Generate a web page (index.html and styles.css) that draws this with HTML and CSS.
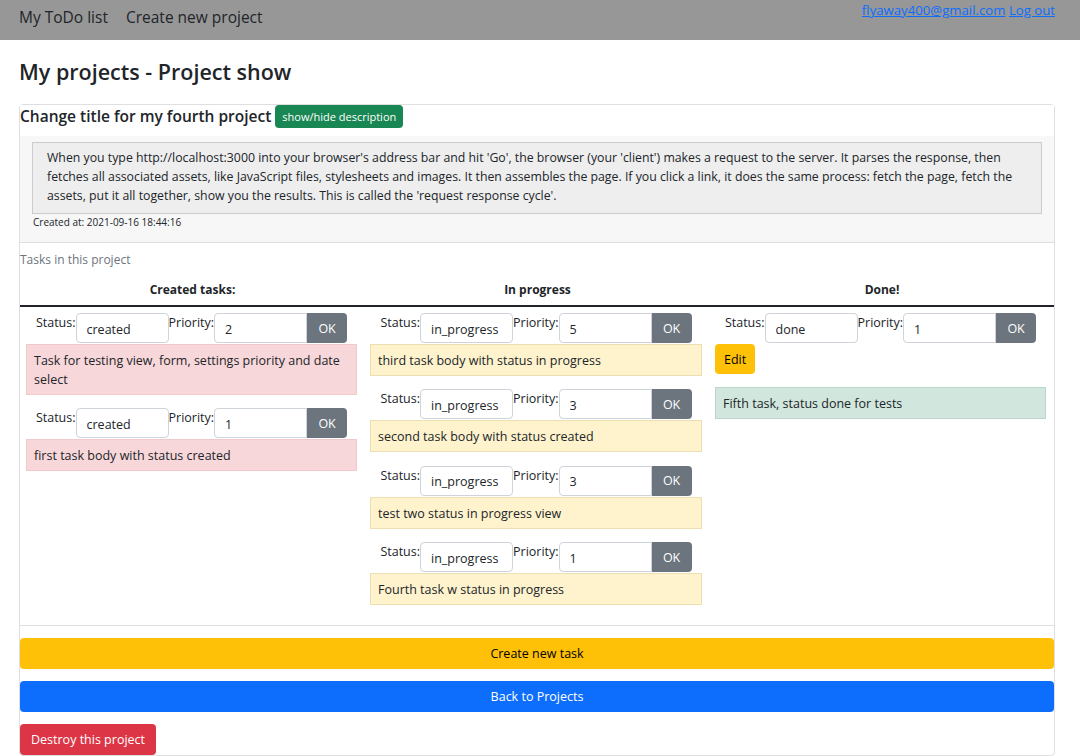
FILE: index.html
```html
<!DOCTYPE html>
<html lang="en">
<head>
<meta charset="utf-8">
<title>My projects - Project show</title>
<link rel="stylesheet" href="styles.css">
</head>
<body>
<nav class="navbar">
  <div class="nav-left">
    <a class="nav-link" href="#">My ToDo list</a>
    <a class="nav-link" href="#">Create new project</a>
  </div>
  <div class="nav-right">
    <a class="user-link" href="#">flyaway400@gmail.com</a>
    <a class="user-link" href="#">Log out</a>
  </div>
</nav>
<main class="page">
  <h1 class="page-title">My projects - Project show</h1>
  <section class="card">
    <div class="card-header">
      <h2 class="project-title">Change title for my fourth project</h2>
      <button class="btn btn-success btn-sm">show/hide description</button>
    </div>
    <div class="desc-area">
      <div class="desc-box">When you type http://localhost:3000 into your browser's address bar and hit 'Go', the browser (your 'client') makes a request to the server. It parses the response, then fetches all associated assets, like JavaScript files, stylesheets and images. It then assembles the page. If you click a link, it does the same process: fetch the page, fetch the assets, put it all together, show you the results. This is called the 'request response cycle'.</div>
      <div class="created">Created at: 2021-09-16 18:44:16</div>
    </div>
    <div class="card-body">
      <div class="tasks-label">Tasks in this project</div>
      <div class="board">
        <div class="col-head">Created tasks:</div>
        <div class="col-head">In progress</div>
        <div class="col-head">Done!</div>

        <div class="col">
          <div class="task">
            <form class="task-form"><label>Status:</label><input class="inp" value="created"><label>Priority:</label><input class="inp inp-grp" value="2"><button type="button" class="btn-ok">OK</button></form>
            <div class="task-body created-bg">Task for testing view, form, settings priority and date select</div>
          </div>
          <div class="task">
            <form class="task-form"><label>Status:</label><input class="inp" value="created"><label>Priority:</label><input class="inp inp-grp" value="1"><button type="button" class="btn-ok">OK</button></form>
            <div class="task-body created-bg">first task body with status created</div>
          </div>
        </div>

        <div class="col">
          <div class="task">
            <form class="task-form"><label>Status:</label><input class="inp" value="in_progress"><label>Priority:</label><input class="inp inp-grp" value="5"><button type="button" class="btn-ok">OK</button></form>
            <div class="task-body progress-bg">third task body with status in progress</div>
          </div>
          <div class="task">
            <form class="task-form"><label>Status:</label><input class="inp" value="in_progress"><label>Priority:</label><input class="inp inp-grp" value="3"><button type="button" class="btn-ok">OK</button></form>
            <div class="task-body progress-bg">second task body with status created</div>
          </div>
          <div class="task">
            <form class="task-form"><label>Status:</label><input class="inp" value="in_progress"><label>Priority:</label><input class="inp inp-grp" value="3"><button type="button" class="btn-ok">OK</button></form>
            <div class="task-body progress-bg">test two status in progress view</div>
          </div>
          <div class="task">
            <form class="task-form"><label>Status:</label><input class="inp" value="in_progress"><label>Priority:</label><input class="inp inp-grp" value="1"><button type="button" class="btn-ok">OK</button></form>
            <div class="task-body progress-bg">Fourth task w status in progress</div>
          </div>
        </div>

        <div class="col">
          <div class="task">
            <form class="task-form"><label>Status:</label><input class="inp" value="done"><label>Priority:</label><input class="inp inp-grp" value="1"><button type="button" class="btn-ok">OK</button></form>
            <button class="btn btn-warning btn-edit">Edit</button>
            <div class="task-body done-bg">Fifth task, status done for tests</div>
          </div>
        </div>
      </div>
    </div>
    <div class="card-footer">
      <button class="btn btn-warning btn-block">Create new task</button>
      <button class="btn btn-primary btn-block">Back to Projects</button>
      <button class="btn btn-danger btn-destroy">Destroy this project</button>
    </div>
  </section>
</main>
</body>
</html>
```
FILE: styles.css
```css
* { box-sizing: border-box; }
html, body { margin: 0; padding: 0; }
body {
  font-family: "Open Sans", "Noto Sans", sans-serif;
  color: #212529;
  background: #fff;
  font-size: 12px;
}
.navbar {
  height: 40px;
  background: #979797;
  display: flex;
  justify-content: space-between;
  padding: 0 25px 0 19px;
}
.nav-left { display: flex; gap: 18px; padding-top: 5px; }
.nav-link {
  color: #212529;
  text-decoration: none;
  font-size: 15.5px;
  line-height: 24px;
}
.nav-right { padding-top: 1px; font-size: 13.2px; line-height: 18px; }
.user-link { color: #0d6efd; text-decoration: underline; }
.page { padding: 0 25px 0 19px; }
.page-title {
  margin: 0;
  padding: 18px 0 0;
  font-size: 21.5px;
  font-weight: 600;
  line-height: 27px;
  height: 64px;
}
.card {
  border: 1px solid #dfdfdf;
  border-radius: 4px;
}
.card-header {
  display: flex;
  align-items: flex-start;
  height: 31px;
  background: #fff;
}
.project-title {
  margin: 0;
  font-size: 15.5px;
  font-weight: 600;
  line-height: 20px;
  padding-top: 1px;
  margin-right: 4px;
}
.btn {
  font-family: inherit;
  border: 1px solid transparent;
  border-radius: 4px;
  cursor: pointer;
}
.btn-sm {
  font-size: 11px;
  padding: 0 6px;
  height: 23px;
  line-height: 21px;
}
.btn-success { background: #198754; color: #fff; }
.btn-warning { background: #ffc107; color: #000; }
.btn-primary { background: #0d6efd; color: #fff; }
.btn-danger { background: #dc3545; color: #fff; }
.desc-area {
  background: #f7f7f7;
  padding: 6px 12px 12px 12px;
  border-bottom: 1px solid #dfdfdf;
}
.desc-box {
  background: #eeeeee;
  border: 1px solid #cccccc;
  padding: 5px 14px 8px 14px;
  line-height: 19px;
  font-size: 12.3px;
}
.created {
  font-size: 10px;
  line-height: 16px;
  padding-left: 1px;
}
.card-body { padding: 8px 0 6px 0; border-bottom: 1px solid #dfdfdf; }
.tasks-label { color: #6c757d; font-size: 12px; line-height: 17px; }
.board {
  display: grid;
  grid-template-columns: 345px 345px 1fr;
  margin-top: 14px;
}
.col-head {
  text-align: center;
  font-weight: 700;
  font-size: 12px;
  line-height: 16px;
  padding-bottom: 7px;
  border-bottom: 2px solid #212529;
}
.col { padding: 6px 8px 0 6px; }
.col + .col { padding-left: 5px; }
.task { margin-bottom: 13.4px; }
.task-form {
  display: flex;
  justify-content: center;
  align-items: flex-start;
  margin: 0;
}
.task-form label { font-size: 12.5px; line-height: 16px; padding-top: 2px; }
.inp {
  width: 93px;
  height: 30px;
  border: 1px solid #ced4da;
  border-radius: 4px;
  padding: 2px 10px 0;
  font-family: inherit;
  font-size: 12.5px;
  color: #212529;
  background: #fff;
}
.inp-grp { border-top-right-radius: 0; border-bottom-right-radius: 0; }
.btn-ok {
  width: 40px;
  height: 30px;
  border: none;
  border-radius: 0 4px 4px 0;
  background: #6c757d;
  color: #fff;
  font-family: inherit;
  font-size: 12.5px;
  padding: 0;
}
.task-body {
  margin-top: 1px;
  padding: 6px 7px 5px 7px;
  line-height: 19px;
  font-size: 12.5px;
  border: 1px solid;
}
.created-bg { background: #f8d7da; border-color: #f1c8cc; }
.progress-bg { background: #fff3cd; border-color: #eddfb2; }
.done-bg { background: #d1e7dd; border-color: #bcd5ca; }
.btn-edit {
  display: block;
  margin-top: 1px;
  height: 30px;
  padding: 0 8px;
  font-size: 12.5px;
  margin-bottom: 13px;
}
.card-footer {
  padding: 12px 0 0 0;
  display: flex;
  flex-direction: column;
  align-items: flex-start;
  gap: 12px;
}
.btn-block {
  width: 100%;
  height: 31px;
  font-size: 12.5px;
}
.btn-destroy {
  height: 31px;
  padding: 0 10px;
  font-size: 12.5px;
}
```
